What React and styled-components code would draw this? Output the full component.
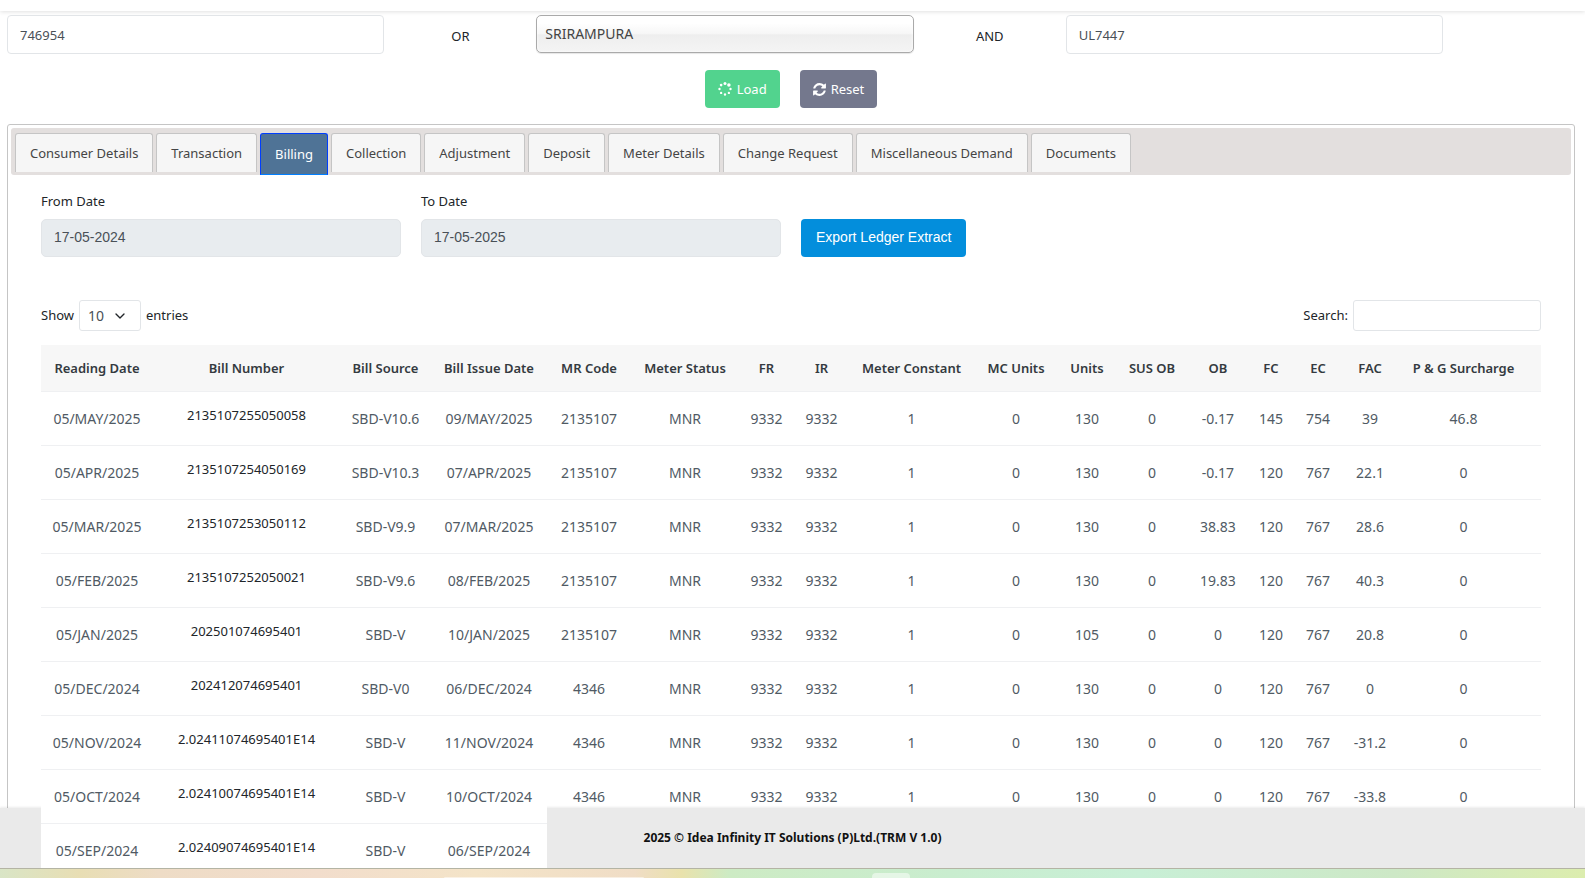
import styled, { createGlobalStyle } from 'styled-components'
import { FiChevronDown } from 'react-icons/fi'

const GlobalStyle = createGlobalStyle`
  * {
    box-sizing: border-box;
  }
  body {
    margin: 0;
    background: #fff;
    font-family: 'Noto Sans', 'Open Sans', sans-serif;
    font-size: 13px;
    line-height: 20px;
    color: #212529;
  }
  button, input, select {
    font: inherit;
    margin: 0;
  }
`

const Screen = styled.div`
  display: flex;
  flex-direction: column;
  height: 100vh;
`

const Page = styled.div`
  position: relative;
  flex: 1;
  min-height: 0;
  overflow: hidden;
`

const TopBar = styled.header`
  height: 11px;
  background: #fff;
  box-shadow: 0 1px 4px rgba(0, 0, 0, 0.12);
`

const SearchRow = styled.div`
  display: grid;
  grid-template-columns: repeat(3, 27fr 8fr);
  column-gap: 20px;
  align-items: start;
  padding: 4px 10px 0 7px;
`

const Joiner = styled.span`
  padding-top: 11px;
  text-align: center;
`

const TextInput = styled.input`
  width: 100%;
  height: 39px;
  padding: 0 12px;
  border: 1px solid #e2e5e8;
  border-radius: 4px;
  background: #fff;
  color: #495057;
`

const DateInput = styled(TextInput)`
  height: 38px;
  padding-bottom: 2px;
  border-radius: 5px;
  background: #e8ecef;
  font-family: 'Liberation Sans', Arial, sans-serif;
  font-size: 14px;
`

const LocationSelect = styled.select`
  appearance: none;
  width: 100%;
  height: 38px;
  padding: 0 8px;
  border: 1px solid #aaa;
  border-radius: 5px;
  background: linear-gradient(#fff 20%, #f6f6f6 50%, #eee 52%, #f4f4f4 100%);
  box-shadow: 0 0 3px #fff inset, 0 1px 1px rgba(0, 0, 0, 0.1);
  color: #444;
  font-size: 14px;
`

const Actions = styled.div`
  display: flex;
  justify-content: center;
  gap: 20px;
  padding: 16px 10px 0 7px;
`

const Button = styled.button`
  display: flex;
  align-items: center;
  gap: 5px;
  height: 38px;
  padding: 0 13px;
  border: 0;
  border-radius: 4px;
  background: ${({ $color }) => $color};
  color: #fff;
  white-space: nowrap;
`

const ExportButton = styled(Button)`
  padding: 0 15px 2px;
  font-family: 'Liberation Sans', Arial, sans-serif;
  font-size: 14px;
`

const Panel = styled.main`
  margin: 16px 10px 0 7px;
  padding: 3px;
  border: 1px solid #c5c5c5;
  border-radius: 3px;
`

const TabList = styled.div`
  display: flex;
  gap: 3px;
  height: 47px;
  padding: 5px 4px 0;
  border-radius: 3px;
  background: #e3dfde;
`

const Tab = styled.button`
  height: ${({ $active }) => ($active ? 42 : 39)}px;
  padding: 0 14px;
  border: 1px solid ${({ $active }) => ($active ? '#003eff' : '#c5c5c5')};
  border-bottom: ${({ $active }) => ($active ? '1px solid #007fff' : '0')};
  border-radius: 3px 3px 0 0;
  background: ${({ $active }) => ($active ? '#4f7396' : '#f6f6f6')};
  color: ${({ $active }) => ($active ? '#fff' : '#454545')};
  white-space: nowrap;
`

const TabPanel = styled.section`
  padding: 16px 30px;
`

const Filters = styled.div`
  display: grid;
  grid-template-columns: repeat(4, 1fr);
  column-gap: 20px;
  align-items: end;
`

const Field = styled.label`
  display: flex;
  flex-direction: column;
  gap: 8px;
`

const TableTools = styled.div`
  display: flex;
  justify-content: space-between;
  margin-top: 43px;
`

const InlineLabel = styled.label`
  display: flex;
  gap: 5px;
  line-height: 30px;
`

const SelectBox = styled.span`
  position: relative;
  display: flex;
  svg {
    position: absolute;
    top: 8px;
    right: 13px;
    pointer-events: none;
  }
`

const LengthSelect = styled.select`
  appearance: none;
  width: 62px;
  height: 31px;
  padding: 0 8px 2px;
  border: 1px solid #e2e5e8;
  border-radius: 3px;
  background: #fff;
  color: #495057;
  font-size: 14px;
`

const SearchInput = styled(TextInput)`
  width: 188px;
  height: 31px;
  border-radius: 3px;
`

const Table = styled.table`
  width: 100%;
  margin-top: 14px;
  border-spacing: 0;
  table-layout: fixed;
  text-align: center;
  white-space: nowrap;
  th, td {
    padding: 0;
    border-bottom: 1px solid #eff0f2;
  }
  th {
    height: 47px;
    background: #f7f7f7;
    color: #343a40;
    font-weight: 600;
  }
  td {
    height: 54px;
    color: #505a64;
    font-size: 14px;
  }
  th:last-child, td:last-child {
    padding-right: 12px;
  }
  td:nth-child(-n + 4) {
    position: sticky;
    left: 0;
    z-index: 2;
    background: #fff;
  }
`

const BillLink = styled.a`
  display: block;
  padding-bottom: 8px;
  color: #212529;
  font-size: 13px;
  text-decoration: none;
`

const Footer = styled.footer`
  position: absolute;
  inset: auto 0 0;
  z-index: 1;
  display: flex;
  align-items: center;
  justify-content: center;
  height: 60px;
  background: #eaeaea;
  box-shadow: 0 -1px 2px rgba(0, 0, 0, 0.08);
  color: #111;
  font-size: 12px;
  font-weight: 700;
`

const TaskBar = styled.div`
  display: flex;
  align-items: flex-end;
  height: 10px;
  padding-left: 28%;
  border-top: 1px solid #b4b4a4;
  background: linear-gradient(
    90deg,
    #d9e5c6 0%,
    #e8deb4 5%,
    #eedcc6 10%,
    #f2ddcc 20%,
    #f4e4c8 30%,
    #f0ddc6 40%,
    #e9e2ac 43%,
    #cdebc4 46%,
    #c9edcf 60%,
    #c8efd6 72%,
    #cde8c6 88%,
    #dcedae 100%
  );
`

const TaskItem = styled.div`
  width: ${({ $width }) => $width}px;
  height: ${({ $height }) => $height}px;
  border-radius: 4px 4px 0 0;
  background: rgba(255, 255, 255, 0.5);
  & + & {
    margin-left: 20%;
  }
`

const tabs = [
  'Consumer Details',
  'Transaction',
  'Billing',
  'Collection',
  'Adjustment',
  'Deposit',
  'Meter Details',
  'Change Request',
  'Miscellaneous Demand',
  'Documents',
]

const columns = [
  ['Reading Date', 112],
  ['Bill Number', 187],
  ['Bill Source', 91],
  ['Bill Issue Date', 116],
  ['MR Code', 84],
  ['Meter Status', 108],
  ['FR', 55],
  ['IR', 55],
  ['Meter Constant', 125],
  ['MC Units', 84],
  ['Units', 58],
  ['SUS OB', 72],
  ['OB', 60],
  ['FC', 46],
  ['EC', 48],
  ['FAC', 56],
  ['P & G Surcharge', 143],
]

const bills = [
  ['05/MAY/2025', '2135107255050058', 'SBD-V10.6', '09/MAY/2025', '2135107', 'MNR', '9332', '9332', '1', '0', '130', '0', '-0.17', '145', '754', '39', '46.8'],
  ['05/APR/2025', '2135107254050169', 'SBD-V10.3', '07/APR/2025', '2135107', 'MNR', '9332', '9332', '1', '0', '130', '0', '-0.17', '120', '767', '22.1', '0'],
  ['05/MAR/2025', '2135107253050112', 'SBD-V9.9', '07/MAR/2025', '2135107', 'MNR', '9332', '9332', '1', '0', '130', '0', '38.83', '120', '767', '28.6', '0'],
  ['05/FEB/2025', '2135107252050021', 'SBD-V9.6', '08/FEB/2025', '2135107', 'MNR', '9332', '9332', '1', '0', '130', '0', '19.83', '120', '767', '40.3', '0'],
  ['05/JAN/2025', '202501074695401', 'SBD-V', '10/JAN/2025', '2135107', 'MNR', '9332', '9332', '1', '0', '105', '0', '0', '120', '767', '20.8', '0'],
  ['05/DEC/2024', '202412074695401', 'SBD-V0', '06/DEC/2024', '4346', 'MNR', '9332', '9332', '1', '0', '130', '0', '0', '120', '767', '0', '0'],
  ['05/NOV/2024', '2.02411074695401E14', 'SBD-V', '11/NOV/2024', '4346', 'MNR', '9332', '9332', '1', '0', '130', '0', '0', '120', '767', '-31.2', '0'],
  ['05/OCT/2024', '2.02410074695401E14', 'SBD-V', '10/OCT/2024', '4346', 'MNR', '9332', '9332', '1', '0', '130', '0', '0', '120', '767', '-33.8', '0'],
  ['05/SEP/2024', '2.02409074695401E14', 'SBD-V', '06/SEP/2024'],
]

const SpinnerIcon = () => (
  <svg width='14' height='14' viewBox='0 0 1792 1792' fill='currentColor' aria-hidden='true'>
    <circle cx='896' cy='192' r='192' />
    <circle cx='1394' cy='398' r='224' />
    <circle cx='1600' cy='896' r='150' />
    <circle cx='1394' cy='1394' r='150' />
    <circle cx='896' cy='1600' r='150' />
    <circle cx='398' cy='1394' r='150' />
    <circle cx='192' cy='896' r='150' />
    <circle cx='398' cy='398' r='170' />
  </svg>
)

const RefreshIcon = () => (
  <svg width='13' height='15' viewBox='0 0 1536 1792' fill='currentColor' aria-hidden='true'>
    <path d='M1511 1056q0 5-1 7-64 268-268 434.5t-478 166.5q-146 0-282.5-55t-243.5-157l-129 129q-19 19-45 19t-45-19-19-45v-448q0-26 19-45t45-19h448q26 0 45 19t19 45-19 45l-137 137q71 66 161 102t187 36q134 0 250-65t186-179q11-17 53-117 8-23 30-23h192q13 0 22.5 9.5t9.5 22.5zm25-800v448q0 26-19 45t-45 19h-448q-26 0-45-19t-19-45 19-45l138-138q-148-137-349-137-134 0-250 65t-186 179q-11 17-53 117-8 23-30 23h-199q-13 0-22.5-9.5t-9.5-22.5v-7q65-268 270-434.5t480-166.5q146 0 284 55.5t245 156.5l130-129q19-19 45-19t45 19 19 45z' />
  </svg>
)

const BillTable = () => (
  <Table>
    <colgroup>
      {columns.map(([name, width]) => <col key={name} width={width} />)}
    </colgroup>
    <thead>
      <tr>
        {columns.map(([name]) => <th key={name} scope='col'>{name}</th>)}
      </tr>
    </thead>
    <tbody>
      {bills.map((bill) => (
        <tr key={bill[0]}>
          {columns.map(([name], i) => (
            <td key={name}>
              {i === 1 ? <BillLink href='#bill'>{bill[i]}</BillLink> : bill[i]}
            </td>
          ))}
        </tr>
      ))}
    </tbody>
  </Table>
)

const App = () => (
  <Screen>
    <GlobalStyle />
    <Page>
      <TopBar />
      <SearchRow>
        <TextInput aria-label='Consumer ID' defaultValue='746954' />
        <Joiner>OR</Joiner>
        <LocationSelect aria-label='Location'>
          <option>SRIRAMPURA</option>
        </LocationSelect>
        <Joiner>AND</Joiner>
        <TextInput aria-label='RR number' defaultValue='UL7447' />
      </SearchRow>
      <Actions>
        <Button type='button' $color='#52d38e'><SpinnerIcon /> Load</Button>
        <Button type='button' $color='#74788d'><RefreshIcon /> Reset</Button>
      </Actions>
      <Panel>
        <TabList role='tablist'>
          {tabs.map((tab) => (
            <Tab
              key={tab}
              type='button'
              role='tab'
              aria-selected={tab === 'Billing'}
              $active={tab === 'Billing'}
            >
              {tab}
            </Tab>
          ))}
        </TabList>
        <TabPanel role='tabpanel' aria-label='Billing'>
          <Filters>
            <Field>
              From Date
              <DateInput readOnly value='17-05-2024' />
            </Field>
            <Field>
              To Date
              <DateInput readOnly value='17-05-2025' />
            </Field>
            <div>
              <ExportButton type='button' $color='#038edc'>Export Ledger Extract</ExportButton>
            </div>
          </Filters>
          <TableTools>
            <InlineLabel>
              Show
              <SelectBox>
                <LengthSelect defaultValue='10'>
                  <option>10</option>
                  <option>25</option>
                  <option>50</option>
                </LengthSelect>
                <FiChevronDown size={16} />
              </SelectBox>
              entries
            </InlineLabel>
            <InlineLabel>
              Search:
              <SearchInput type='search' />
            </InlineLabel>
          </TableTools>
          <BillTable />
        </TabPanel>
      </Panel>
      <Footer>2025 © Idea Infinity IT Solutions (P)Ltd.(TRM V 1.0)</Footer>
    </Page>
    <TaskBar>
      <TaskItem $width={200} $height={1} />
      <TaskItem $width={38} $height={5} />
    </TaskBar>
  </Screen>
)

export default App
